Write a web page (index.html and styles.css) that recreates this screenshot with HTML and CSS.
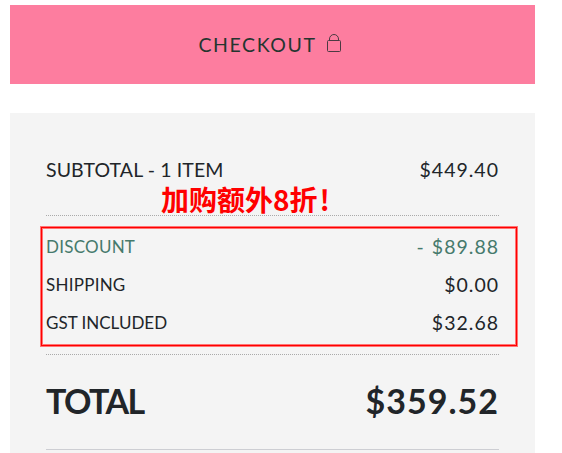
FILE: index.html
```html
<!DOCTYPE html>
<html lang="en">
<head>
    <meta charset="UTF-8">
    <title>Cart Summary</title>
    <link rel="stylesheet" href="styles.css">
</head>
<body>

    <button class="checkout" type="button">
        <span class="checkout-label">CHECKOUT</span>
        <svg class="lock" width="16" height="20" viewBox="0 0 16 20" fill="none" stroke="#4b3a42">
            <rect x="1.5" y="7.5" width="13" height="11" rx="1"/>
            <path d="M3.5 7.5V6a4.5 4.5 0 0 1 9 0v1.5"/>
        </svg>
    </button>

    <div class="summary">
        <div class="row subtotal">
            <span class="name">SUBTOTAL - 1 ITEM</span>
            <span class="amount">$449.40</span>
        </div>

        <div class="details">
            <div class="row discount">
                <span class="name">DISCOUNT</span>
                <span class="amount">- $89.88</span>
            </div>
            <div class="row shipping">
                <span class="name">SHIPPING</span>
                <span class="amount">$0.00</span>
            </div>
            <div class="row gst">
                <span class="name">GST INCLUDED</span>
                <span class="amount">$32.68</span>
            </div>
        </div>

        <div class="row total">
            <span class="name">TOTAL</span>
            <span class="amount">$359.52</span>
        </div>

        <div class="note" lang="zh-CN">加购额外8折<span class="mark">!</span></div>
        <div class="highlight"></div>
    </div>

</body>
</html>
```

FILE: styles.css
```css
body {
    font-family: Lato, "Liberation Sans", sans-serif;
    background-color: white;
    color: #212529;
    margin: 0;
    padding: 5px 27px 0 10px;
    height: 453px;
    box-sizing: border-box;
    overflow: hidden;
}

.checkout {
    display: flex;
    align-items: center;
    justify-content: center;
    gap: 9px;
    width: 100%;
    height: 79px;
    padding: 0 5px 0 0;
    border: none;
    background-color: #fd7d9f;
    color: #24352f;
    font-family: inherit;
    font-size: 19.5px;
    cursor: pointer;
}

.checkout-label {
    letter-spacing: 1.6px;
}

.lock {
    margin-top: -3px;
}

.summary {
    position: relative;
    margin-top: 29px;
    padding: 12px 36px 0;
    height: 340px;
    box-sizing: border-box;
    background-color: #f4f4f4;
}

.row {
    display: flex;
    align-items: center;
    justify-content: space-between;
    height: 38px;
    padding-bottom: 2px;
    box-sizing: border-box;
    white-space: nowrap;
}

.name {
    font-size: 17px;
    letter-spacing: 0.25px;
}

.amount {
    font-size: 19.5px;
    letter-spacing: 1px;
}

.subtotal {
    height: 91px;
    border-bottom: 1px dotted #aaa;
}

.subtotal .name {
    font-size: 19.5px;
    letter-spacing: 0.1px;
}

.details {
    padding: 12px 0;
    border-bottom: 1px dotted #aaa;
}

.discount {
    color: #467a6c;
}

.discount .amount {
    word-spacing: 1px;
}

.gst .name {
    letter-spacing: 0;
}

.total {
    height: 95px;
    padding-bottom: 3px;
    border-bottom: 1px solid #cdced3;
    font-weight: bold;
}

.total .name,
.total .amount {
    font-size: 34px;
}

.total .name {
    letter-spacing: -1.6px;
}

.total .amount {
    letter-spacing: 1px;
}

/* marked-up parts lie over the summary */
.note {
    position: absolute;
    left: 151px;
    top: 66px;
    color: red;
    font-family: "Noto Sans CJK SC", sans-serif;
    font-size: 28px;
    font-weight: bold;
    line-height: 40px;
    white-space: nowrap;
}

.mark {
    margin-left: 2px;
}

.highlight {
    position: absolute;
    left: 30px;
    top: 113px;
    width: 478px;
    height: 121px;
    box-sizing: border-box;
    border: 1px solid #ff7474;
    outline: 1px solid red;
    outline-offset: -2px;
    box-shadow: inset 0 0 0 2px #ff7474;
}
```
